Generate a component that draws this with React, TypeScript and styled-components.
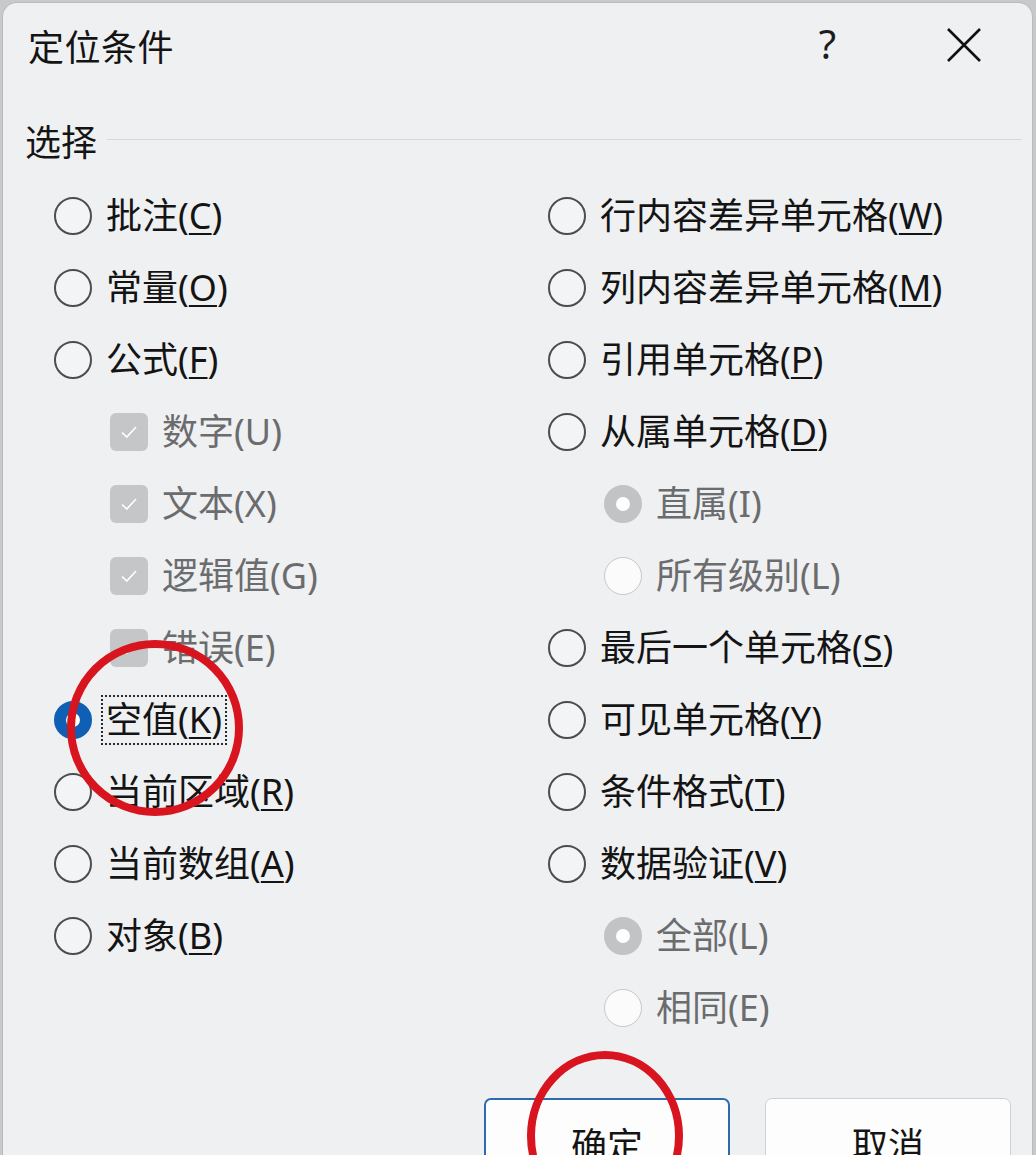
import React from "react";
import styled, { createGlobalStyle } from "styled-components";

const GlobalStyle = createGlobalStyle`
  html, body {
    margin: 0;
    padding: 0;
    height: 1155px;
    overflow: hidden;
    background: #c7c9cb;
  }
  body {
    font-family: "Segoe UI", "Noto Sans", "Noto Sans CJK SC", sans-serif;
  }
`;

type Kind = "radio" | "check" | "sub";

interface Option {
  key: string;
  label: string;
  hotkey: string;
  kind: Kind;
  checked?: boolean;
  disabled?: boolean;
  focused?: boolean;
}

const leftOptions: Option[] = [
  { key: "c", label: "批注", hotkey: "C", kind: "radio" },
  { key: "o", label: "常量", hotkey: "O", kind: "radio" },
  { key: "f", label: "公式", hotkey: "F", kind: "radio" },
  { key: "u", label: "数字", hotkey: "U", kind: "check", checked: true, disabled: true },
  { key: "x", label: "文本", hotkey: "X", kind: "check", checked: true, disabled: true },
  { key: "g", label: "逻辑值", hotkey: "G", kind: "check", checked: true, disabled: true },
  { key: "e", label: "错误", hotkey: "E", kind: "check", checked: true, disabled: true },
  { key: "k", label: "空值", hotkey: "K", kind: "radio", checked: true, focused: true },
  { key: "r", label: "当前区域", hotkey: "R", kind: "radio" },
  { key: "a", label: "当前数组", hotkey: "A", kind: "radio" },
  { key: "b", label: "对象", hotkey: "B", kind: "radio" },
];

const rightOptions: Option[] = [
  { key: "w", label: "行内容差异单元格", hotkey: "W", kind: "radio" },
  { key: "m", label: "列内容差异单元格", hotkey: "M", kind: "radio" },
  { key: "p", label: "引用单元格", hotkey: "P", kind: "radio" },
  { key: "d", label: "从属单元格", hotkey: "D", kind: "radio" },
  { key: "i", label: "直属", hotkey: "I", kind: "sub", checked: true, disabled: true },
  { key: "l1", label: "所有级别", hotkey: "L", kind: "sub", disabled: true },
  { key: "s", label: "最后一个单元格", hotkey: "S", kind: "radio" },
  { key: "y", label: "可见单元格", hotkey: "Y", kind: "radio" },
  { key: "t", label: "条件格式", hotkey: "T", kind: "radio" },
  { key: "v", label: "数据验证", hotkey: "V", kind: "radio" },
  { key: "l2", label: "全部", hotkey: "L", kind: "sub", checked: true, disabled: true },
  { key: "e2", label: "相同", hotkey: "E", kind: "sub", disabled: true },
];

const App = (): JSX.Element => {
  const renderOption = (o: Option) => (
    <Row key={o.key} indent={o.kind !== "radio"}>
      {o.kind === "check" ? (
        <CheckBox>
          <svg width="18" height="14" viewBox="0 0 18 14">
            <polyline points="2,7.5 6.8,12 16,2" fill="none" stroke="#fff" strokeWidth="1.6" />
          </svg>
        </CheckBox>
      ) : (
        <RadioDot disabled={!!o.disabled} checked={!!o.checked} />
      )}
      <Label disabled={!!o.disabled} focused={!!o.focused}>
        {o.label}(
        {o.disabled ? o.hotkey : <u>{o.hotkey}</u>})
      </Label>
    </Row>
  );

  return (
    <>
      <GlobalStyle />
      <Dialog>
        <TitleBar>
          <Title>定位条件</Title>
          <TitleActions>
            <Help>?</Help>
            <CloseButton>
              <svg width="36" height="36" viewBox="0 0 36 36">
                <path d="M2 2 L34 34 M34 2 L2 34" stroke="#111" strokeWidth="2.6" fill="none" />
              </svg>
            </CloseButton>
          </TitleActions>
        </TitleBar>

        <GroupHeader>
          <span>选择</span>
          <Rule />
        </GroupHeader>

        <Columns>
          <Column>{leftOptions.map(renderOption)}</Column>
          <Column>{rightOptions.map(renderOption)}</Column>
        </Columns>

        <Buttons>
          <Button primary>确定</Button>
          <Button>取消</Button>
        </Buttons>

        <Marks viewBox="0 0 1029 1200" width="1029" height="1200">
          <ellipse
            cx="152"
            cy="725"
            rx="84"
            ry="84"
            fill="none"
            stroke="#d8141e"
            strokeWidth="8"
          />
          <ellipse
            cx="602"
            cy="1133"
            rx="74"
            ry="81"
            fill="none"
            stroke="#d8141e"
            strokeWidth="8"
          />
        </Marks>
      </Dialog>
    </>
  );
};

export default App;

const Dialog = styled.div`
  position: relative;
  margin: 3px 4px 0 3px;
  height: 1200px;
  background: #eff0f2;
  border-radius: 14px 14px 0 0;
  box-shadow: 0 0 0 1px #b9bbbd;
  display: flex;
  flex-direction: column;
  color: #141414;
`;

const TitleBar = styled.div`
  height: 84px;
  display: flex;
  align-items: center;
  justify-content: space-between;
  padding-left: 25px;
  padding-right: 50px;
`;

const Title = styled.div`
  font-size: 36px;
  letter-spacing: 0.5px;
`;

const TitleActions = styled.div`
  display: flex;
  align-items: center;
  gap: 110px;
`;

const Help = styled.div`
  font-size: 40px;
  color: #1c1c1c;
  margin-top: -4px;
`;

const CloseButton = styled.div`
  width: 36px;
  height: 36px;
  display: flex;
`;

const GroupHeader = styled.div`
  margin-top: 28px;
  height: 50px;
  display: flex;
  align-items: center;
  gap: 10px;
  padding-left: 22px;
  padding-right: 10px;
  font-size: 36px;
`;

const Rule = styled.div`
  flex: 1;
  height: 1px;
  margin-top: -2px;
  background: #d6d7d9;
`;

const Columns = styled.div`
  margin-top: 15px;
  display: grid;
  grid-template-columns: 494px 1fr;
  padding-left: 51px;
`;

const Column = styled.div`
  display: flex;
  flex-direction: column;
`;

const Row = styled.div<{ indent: boolean }>`
  height: 72px;
  display: flex;
  align-items: center;
  gap: 9px;
  padding-left: ${(p) => (p.indent ? "56px" : "0")};
`;

const RadioDot = styled.span<{ checked: boolean; disabled: boolean }>`
  box-sizing: border-box;
  flex: none;
  width: 38px;
  height: 38px;
  border-radius: 50%;
  ${(p) => {
    if (p.checked && p.disabled)
      return "background: #fff; border: 12px solid #c2c3c5;";
    if (p.checked) return "background: #fff; border: 12px solid #0f5fb4;";
    if (p.disabled) return "background: #fbfbfc; border: 1.5px solid #c7c8ca;";
    return "background: #f3f4f5; border: 2px solid #4d4d4d;";
  }}
`;

const CheckBox = styled.span`
  flex: none;
  width: 38px;
  height: 38px;
  border-radius: 6px;
  background: #c5c6c8;
  display: flex;
  align-items: center;
  justify-content: center;
`;

const Label = styled.span<{ disabled: boolean; focused: boolean }>`
  font-size: 36px;
  line-height: 46px;
  padding: 0 3px;
  border: 2px dotted ${(p) => (p.focused ? "#2a2a2a" : "transparent")};
  color: ${(p) => (p.disabled ? "#6b6c6e" : "#141414")};
  white-space: nowrap;
  u {
    text-decoration-thickness: 2px;
    text-underline-offset: 4px;
  }
`;

const Buttons = styled.div`
  margin-top: 54px;
  display: flex;
  justify-content: flex-end;
  gap: 35px;
  padding-right: 21px;
`;

const Button = styled.div<{ primary?: boolean }>`
  box-sizing: border-box;
  width: 246px;
  height: 84px;
  border-radius: 7px;
  background: #fdfdfd;
  border: ${(p) => (p.primary ? "2px solid #2b6cb0" : "1.5px solid #cfd0d2")};
  display: flex;
  align-items: center;
  justify-content: center;
  font-size: 36px;
  padding-top: 6px;
`;

const Marks = styled.svg`
  position: absolute;
  top: 0;
  left: 0;
  pointer-events: none;
`;
